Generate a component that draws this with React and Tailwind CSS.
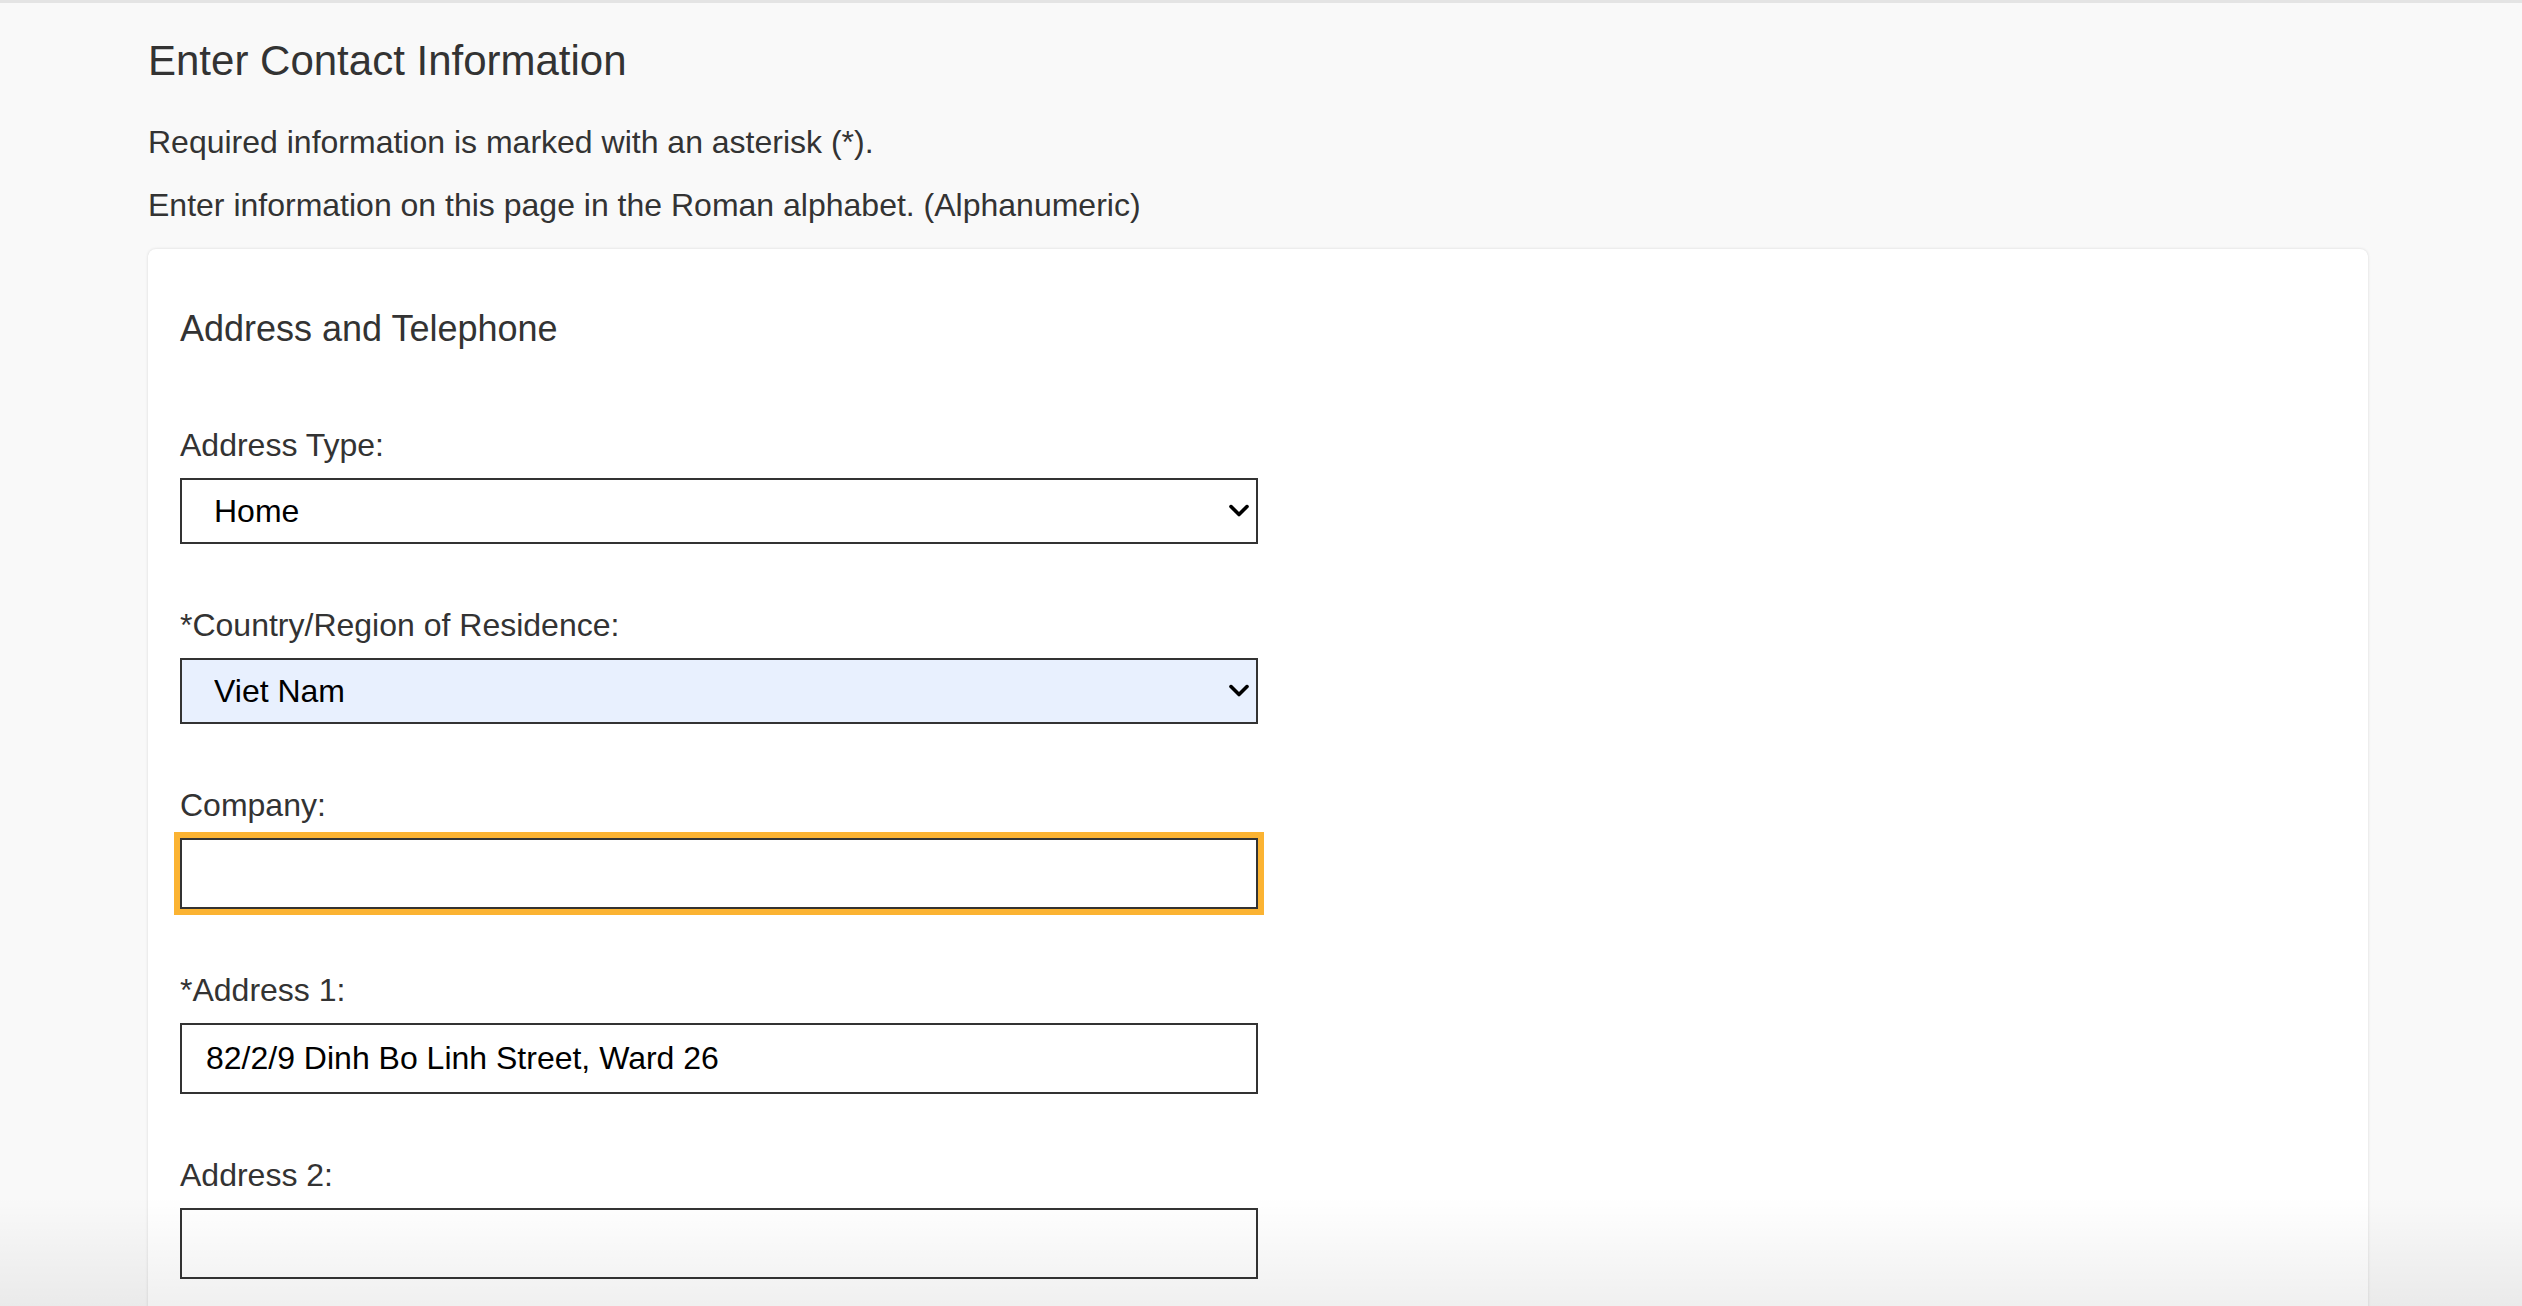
import React from 'react';

const fieldLabel = 'block text-[32px] leading-[40px] text-[#333] mb-[13px]';

function Chevron() {
  return (
    <svg
      className="absolute right-[9px] top-1/2 -translate-y-1/2 pointer-events-none"
      width="20"
      height="13"
      viewBox="0 0 20 13"
      fill="none"
    >
      <polyline points="2,2 10,10 18,2" stroke="#000" strokeWidth="3.6" strokeLinecap="round" strokeLinejoin="round" />
    </svg>
  );
}

function SelectField({ label, value, filled }) {
  return (
    <div>
      <label className={fieldLabel}>{label}</label>
      <div className="relative w-[1078px]">
        <select
          defaultValue={value}
          className={
            'appearance-none w-full h-[66px] border-2 border-[#333] pl-[32px] text-[32px] text-black outline-none ' +
            (filled ? 'bg-[#e8f0fe]' : 'bg-white')
          }
        >
          <option>{value}</option>
        </select>
        <Chevron />
      </div>
    </div>
  );
}

function TextField({ label, value, focused }) {
  return (
    <div>
      <label className={fieldLabel}>{label}</label>
      <input
        type="text"
        defaultValue={value}
        className={
          'block w-[1078px] h-[71px] border-2 border-[#333] bg-white pl-[24px] text-[32px] text-black ' +
          (focused ? 'outline-solid outline-[6px] outline-[#fbb332]' : 'outline-none')
        }
      />
    </div>
  );
}

export default function App() {
  return (
    <div className="relative h-[1306px] overflow-hidden bg-[#f9f9f9] border-t-[3px] border-[#e4e4e4] font-['Liberation_Sans',Arial,sans-serif] text-[#333]">
      <div className="ml-[148px] w-[2220px]">
        <h1 className="mt-[33px] text-[42px] leading-[49px] font-normal">Enter Contact Information</h1>
        <p className="mt-[37px] text-[32px] leading-[40px]">Required information is marked with an asterisk (*).</p>
        <p className="mt-[23px] text-[32px] leading-[40px]">Enter information on this page in the Roman alphabet. (Alphanumeric)</p>

        <div className="mt-[24px] bg-white rounded-t-[8px] shadow-[0_0_3px_rgba(0,0,0,0.14)] px-8 pt-[58px] pb-[60px]">
          <h2 className="text-[36px] leading-[44px] font-normal">Address and Telephone</h2>
          <div className="mt-[74px] flex flex-col gap-[61px]">
            <SelectField label="Address Type:" value="Home" />
            <SelectField label="*Country/Region of Residence:" value="Viet Nam" filled />
            <TextField label="Company:" value="" focused />
            <TextField label="*Address 1:" value="82/2/9 Dinh Bo Linh Street, Ward 26" />
            <TextField label="Address 2:" value="" />
          </div>
        </div>
      </div>

      <div className="absolute bottom-0 left-0 right-0 h-[110px] pointer-events-none bg-linear-to-b from-transparent to-black/[0.06]" />
    </div>
  );
}
